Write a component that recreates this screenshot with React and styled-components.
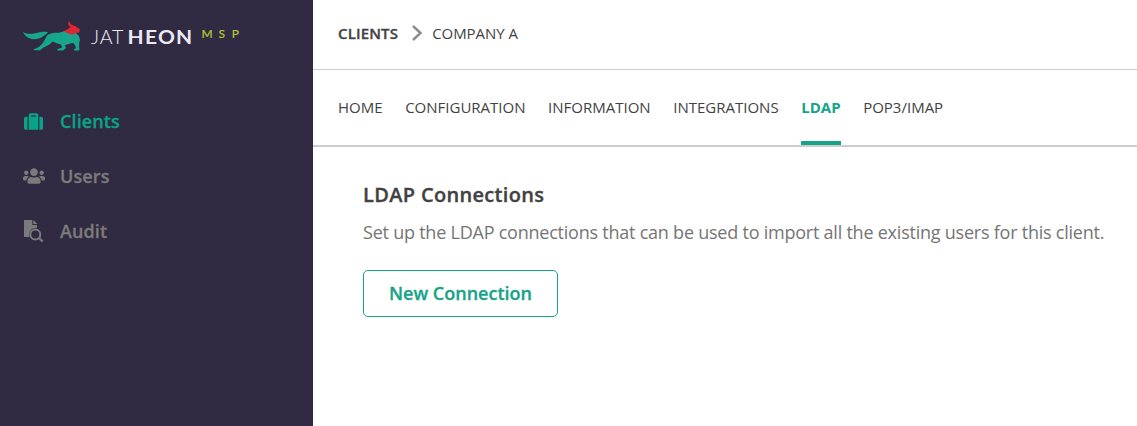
import React from 'react';
import styled, { createGlobalStyle } from 'styled-components';
import { FaSuitcase, FaUsers } from 'react-icons/fa';

const GlobalStyle = createGlobalStyle`
  * { box-sizing: border-box; }
  body {
    margin: 0;
    background: #fff;
    color: #424242;
    font-family: 'Open Sans', 'Liberation Sans', sans-serif;
  }
`;

const Page = styled.div`
  display: flex;
  height: 426px;
  overflow: hidden;
`;

const Sidebar = styled.aside`
  width: 313px;
  flex: none;
  background: #302b42;
`;

const LogoLink = styled.div`
  height: 94px;
  padding: 16px 0 0 20px;
  svg { display: block; }
`;

const SideItem = styled.div`
  display: flex;
  align-items: center;
  height: 55px;
  padding-left: 23px;
  font-size: 18px;
  font-weight: 600;
  line-height: 24px;
  letter-spacing: 0.1px;
  -webkit-text-stroke: 0.3px;
  color: ${(p) => (p.$active ? '#08a488' : '#7b7b7b')};
`;

const SideLabel = styled.span`
  padding-bottom: 2px;
`;

const IconSlot = styled.span`
  display: flex;
  width: 37px;
  padding-left: ${(p) => p.$inset || 0}px;
  padding-bottom: 1px;
  svg { display: block; }
`;

const Main = styled.main`
  flex: 1;
  min-width: 0;
`;

const Breadcrumb = styled.div`
  display: flex;
  align-items: center;
  height: 70px;
  padding: 0 25px 3px;
  border-bottom: 1px solid #cdcdcd;
  font-size: 15px;
  svg { margin: 0 9px 0 13px; }
`;

const Crumb = styled.span`
  padding-bottom: 1px;
  font-weight: ${(p) => (p.$strong ? 600 : 400)};
  letter-spacing: ${(p) => (p.$strong ? '0.15px' : '-0.05px')};
  -webkit-text-stroke: ${(p) => (p.$strong ? '0.3px' : '0')};
`;

const Tabs = styled.nav`
  display: flex;
  gap: 22.6px;
  height: 77px;
  padding: 0 25px;
  border-bottom: 2px solid #cdcdcd;
`;

const Tab = styled.span`
  display: flex;
  align-items: center;
  padding-top: ${(p) => (p.$active ? '2px' : '0')};
  padding-bottom: ${(p) => (p.$active ? '0' : '2px')};
  font-size: 15px;
  font-weight: ${(p) => (p.$active ? 700 : 400)};
  color: ${(p) => (p.$active ? '#17a389' : '#424242')};
  border-bottom: ${(p) => (p.$active ? '4px solid #17a389' : '0')};
`;

const Content = styled.section`
  padding: 34px 0 0 50px;
`;

const Title = styled.h1`
  margin: 0;
  font-size: 20px;
  line-height: 28px;
  font-weight: 600;
  letter-spacing: 0.33px;
  -webkit-text-stroke: 0.35px;
`;

const Description = styled.p`
  margin: 10px 0 0;
  font-size: 18px;
  line-height: 26px;
  letter-spacing: -0.23px;
  color: #757575;
  white-space: nowrap;
`;

const Button = styled.button`
  display: block;
  width: 195px;
  height: 47px;
  margin-top: 25px;
  padding: 0 0 2px;
  border: 1px solid #17a389;
  border-radius: 5px;
  background: #fff;
  color: #17a389;
  font: 600 18px 'Open Sans', sans-serif;
  -webkit-text-stroke: 0.3px;
`;

function Logo() {
  return (
    <svg width="230" height="40" viewBox="20 16 230 40">
      <path
        fill="#17a68b"
        d="M23 32C26 34 31 34.300 35 33.300C40 32 44 31.300 48 32.300C46 34.500 43 37 39 38.500C33 40.500 26 38.500 23 32Z"
      />
      <path
        fill="#17a68b"
        d="M47 35.500C51 32.300 56 33 60 32.500L64.500 31L71 34L76 33L79 36L80 40C79 42.500 79 45 79.300 48L79.300 50.500L74.500 50.500L73.800 49.300L76 48.300C75.500 45.500 74.500 44 73 43C71 42.500 69 44 66.500 44.500L65 45.500L66 48L63 50.500L58 50.500L57 49.300L62 47.500L61 44.500C58 44 55 42.500 52.500 41.500C50.500 44.500 47 45.500 43.500 47.500L40 50.300L34.500 50.300L33.500 49C38 48.500 41 45.500 43.500 42Z"
      />
      <path
        fill="#df2632"
        d="M69 21L71 24.500L76 26.500L80 29.500L79 32.500L75.500 33L72 35L63.500 31.300L68 29L70.500 27L68 24.500Z"
      />
      <g fontFamily="Lato" fontSize="19.500" fill="#ebe9f1">
        <text x="91" y="44" fontWeight="300" letterSpacing="0.800">JAT</text>
        <text x="127.500" y="44" fontWeight="700" letterSpacing="1.200" textLength="66" lengthAdjust="spacingAndGlyphs">HEON</text>
      </g>
      <g fontFamily="Lato" fontSize="12" fill="#b4c832" stroke="#b4c832" strokeWidth="0.200">
        <text x="201.500" y="38">M</text>
        <text x="218.500" y="38">S</text>
        <text x="231.800" y="38">P</text>
      </g>
    </svg>
  );
}

function AuditIcon() {
  return (
    <svg width="21" height="23" viewBox="0 0 21 23" fill="#7b7b7b">
      <path d="M1 0H9.300V5H14V7.700A7 7 0 0 0 6.500 17H1Z" />
      <path d="M10.300 0L14.300 4H10.300Z" />
      <circle cx="12.300" cy="14.500" r="5" fill="none" stroke="#7b7b7b" strokeWidth="2" />
      <path d="M16 18L19.500 21.500" stroke="#7b7b7b" strokeWidth="2.400" />
    </svg>
  );
}

const tabs = ['HOME', 'CONFIGURATION', 'INFORMATION', 'INTEGRATIONS', 'LDAP', 'POP3/IMAP'];

export default function App() {
  return (
    <Page>
      <GlobalStyle />
      <Sidebar>
        <LogoLink><Logo /></LogoLink>
        <SideItem $active>
          <IconSlot $inset={1}><FaSuitcase size={19} /></IconSlot>
          <SideLabel>Clients</SideLabel>
        </SideItem>
        <SideItem>
          <IconSlot><FaUsers size={22} /></IconSlot>
          <SideLabel>Users</SideLabel>
        </SideItem>
        <SideItem>
          <IconSlot><AuditIcon /></IconSlot>
          <SideLabel>Audit</SideLabel>
        </SideItem>
      </Sidebar>
      <Main>
        <Breadcrumb>
          <Crumb $strong>CLIENTS</Crumb>
          <svg width="12" height="18" viewBox="0 0 12 18">
            <path d="M2 2L9.500 9L2 16" fill="none" stroke="#8f8f8f" strokeWidth="2.500" />
          </svg>
          <Crumb>COMPANY A</Crumb>
        </Breadcrumb>
        <Tabs>
          {tabs.map((name) => (
            <Tab key={name} $active={name === 'LDAP'}>{name}</Tab>
          ))}
        </Tabs>
        <Content>
          <Title>LDAP Connections</Title>
          <Description>
            Set up the LDAP connections that can be used to import all the existing users for this client.
          </Description>
          <Button>New Connection</Button>
        </Content>
      </Main>
    </Page>
  );
}
